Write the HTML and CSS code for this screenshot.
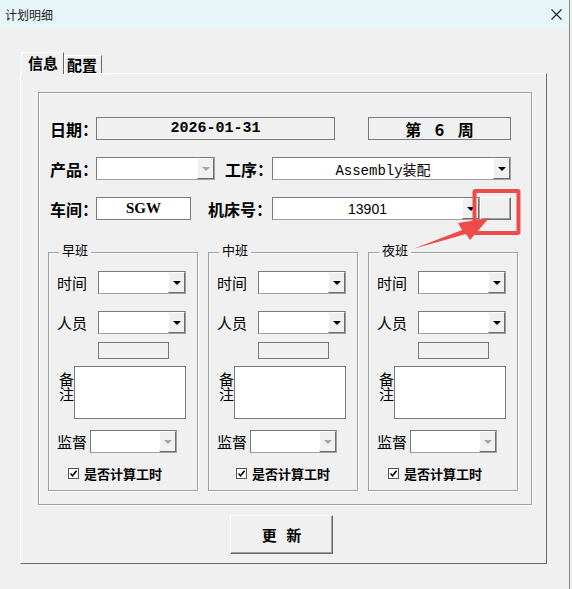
FILE: index.html
```html
<!DOCTYPE html>
<html lang="zh-CN">
<head>
    <meta charset="UTF-8">
    <title>计划明细</title>
    <link rel="stylesheet" href="styles.css">
</head>
<body>

<div class="window">
    <!-- Title bar -->
    <div class="titlebar">
        <span class="title">计划明细</span>
        <svg class="close" width="11" height="11" viewBox="0 0 11 11">
            <path d="M0.5 0.5 L10.5 10.5 M10.5 0.5 L0.5 10.5" stroke="#1a1a1a" stroke-width="1.1" fill="none"/>
        </svg>
    </div>

    <div class="client">
        <!-- Tabs -->
        <div class="tabs">
            <div class="tab active">信息</div>
            <div class="tab">配置</div>
        </div>

        <div class="tab-panel">
            <div class="frame">
                <div class="row">
                    <label class="lbl">日期：</label>
                    <div class="field date">2026-01-31</div>
                    <div class="field week"><span>第 6 周</span></div>
                </div>
                <div class="row">
                    <label class="lbl">产品：</label>
                    <div class="combo w-product">
                        <span class="combo-text"></span>
                        <span class="combo-btn disabled"><i class="tri"></i></span>
                    </div>
                    <label class="lbl lbl-process">工序：</label>
                    <div class="combo w-process">
                        <span class="combo-text mono">Assembly装配</span>
                        <span class="combo-btn"><i class="tri"></i></span>
                    </div>
                </div>
                <div class="row">
                    <label class="lbl">车间：</label>
                    <div class="field shop">SGW</div>
                    <label class="lbl lbl-machine">机床号：</label>
                    <div class="combo w-machine">
                        <span class="combo-text num">13901</span>
                        <span class="combo-btn"><i class="tri"></i></span>
                    </div>
                    <button class="pick"></button>
                </div>

                <!-- Shifts -->
                <div class="shifts">
                    <div class="shift">
                        <div class="shift-title">早班</div>
                        <div class="srow first">
                            <span class="slbl">时间</span>
                            <div class="combo w-shift"><span class="combo-text"></span><span class="combo-btn"><i class="tri"></i></span></div>
                        </div>
                        <div class="srow">
                            <span class="slbl">人员</span>
                            <div class="combo w-shift"><span class="combo-text"></span><span class="combo-btn"><i class="tri"></i></span></div>
                        </div>
                        <div class="small-field"></div>
                        <div class="notes">
                            <span class="notes-lbl">备注</span>
                            <div class="notes-box"></div>
                        </div>
                        <div class="srow super">
                            <span class="slbl short">监督</span>
                            <div class="combo w-super"><span class="combo-text"></span><span class="combo-btn disabled"><i class="tri"></i></span></div>
                        </div>
                        <div class="check">
                            <svg width="11" height="11" viewBox="0 0 11 11"><rect x="0.5" y="0.5" width="10" height="10" fill="#fff" stroke="#555"/><path d="M2.5 5.5 L4.5 7.8 L8.6 2.8" stroke="#000" stroke-width="1.6" fill="none"/></svg>
                            <span>是否计算工时</span>
                        </div>
                    </div>

                    <div class="shift">
                        <div class="shift-title">中班</div>
                        <div class="srow first">
                            <span class="slbl">时间</span>
                            <div class="combo w-shift"><span class="combo-text"></span><span class="combo-btn"><i class="tri"></i></span></div>
                        </div>
                        <div class="srow">
                            <span class="slbl">人员</span>
                            <div class="combo w-shift"><span class="combo-text"></span><span class="combo-btn"><i class="tri"></i></span></div>
                        </div>
                        <div class="small-field"></div>
                        <div class="notes">
                            <span class="notes-lbl">备注</span>
                            <div class="notes-box"></div>
                        </div>
                        <div class="srow super">
                            <span class="slbl short">监督</span>
                            <div class="combo w-super"><span class="combo-text"></span><span class="combo-btn disabled"><i class="tri"></i></span></div>
                        </div>
                        <div class="check wide">
                            <svg width="11" height="11" viewBox="0 0 11 11"><rect x="0.5" y="0.5" width="10" height="10" fill="#fff" stroke="#555"/><path d="M2.5 5.5 L4.5 7.8 L8.6 2.8" stroke="#000" stroke-width="1.6" fill="none"/></svg>
                            <span>是否计算工时</span>
                        </div>
                    </div>

                    <div class="shift">
                        <div class="shift-title">夜班</div>
                        <div class="srow first">
                            <span class="slbl">时间</span>
                            <div class="combo w-shift"><span class="combo-text"></span><span class="combo-btn"><i class="tri"></i></span></div>
                        </div>
                        <div class="srow">
                            <span class="slbl">人员</span>
                            <div class="combo w-shift"><span class="combo-text"></span><span class="combo-btn"><i class="tri"></i></span></div>
                        </div>
                        <div class="small-field"></div>
                        <div class="notes">
                            <span class="notes-lbl">备注</span>
                            <div class="notes-box"></div>
                        </div>
                        <div class="srow super">
                            <span class="slbl short">监督</span>
                            <div class="combo w-super"><span class="combo-text"></span><span class="combo-btn disabled"><i class="tri"></i></span></div>
                        </div>
                        <div class="check">
                            <svg width="11" height="11" viewBox="0 0 11 11"><rect x="0.5" y="0.5" width="10" height="10" fill="#fff" stroke="#555"/><path d="M2.5 5.5 L4.5 7.8 L8.6 2.8" stroke="#000" stroke-width="1.6" fill="none"/></svg>
                            <span>是否计算工时</span>
                        </div>
                    </div>
                </div>
            </div>

            <button class="btn-update">更 新</button>
        </div>
    </div>

    <!-- Red annotation drawn over the dialog -->
    <svg class="mark" width="572" height="589" viewBox="0 0 572 589">
        <rect x="474.5" y="191" width="44" height="42" rx="1" fill="none" stroke="#ef4b4b" stroke-width="4"/>
        <polygon points="413,249 462,230 458,223 489,218 470,240 466,234" fill="#ef4b4b"/>
    </svg>
</div>

</body>
</html>
```

FILE: styles.css
```css
/* Reset */
* {
    margin: 0;
    padding: 0;
    box-sizing: border-box;
}
body {
    font-family: "Noto Sans CJK SC", sans-serif;
    background: #f0f0f0;
    color: #000;
    width: 572px;
    height: 589px;
    overflow: hidden;
}

/* Window */
.window {
    position: relative;
    width: 570px;
    height: 589px;
    background: #f0f0f0;
    border-right: 1px solid #8a8a8a;
}
.titlebar {
    height: 28px;
    background: #e6f5f8;
    display: flex;
    align-items: center;
    justify-content: space-between;
    padding: 0 7px 0 5px;
}
.title {
    font-size: 12px;
    color: #222;
}
.client {
    padding: 24px 0 0 21px;
}

/* Tabs */
.tabs {
    display: flex;
    align-items: flex-end;
    height: 21px;
}
.tab {
    height: 18px;
    font-size: 15px;
    font-weight: 700;
    line-height: 17px;
    padding: 0 4px 0 2px;
    border-top: 1px solid #fff;
    border-left: 1px solid #fff;
    border-right: 1px solid #696969;
}
.tab.active {
    position: relative;
    z-index: 1;
    height: 22px;
    width: 43px;
    margin-bottom: -1px;
    padding: 1px 0 0 6px;
    background: #f0f0f0;
}
.tab-panel {
    width: 527px;
    height: 491px;
    margin-left: -1px;
    border: 1px solid;
    border-color: #fff #696969 #696969 #fff;
    padding: 18px 0 0 17px;
}

/* Inner etched frame */
.frame {
    width: 494px;
    height: 413px;
    border: 1px solid #a0a0a0;
    box-shadow: 1px 1px 0 #fff, inset 1px 1px 0 #fff;
    padding: 24px 0 0 11px;
}
.row {
    display: flex;
    align-items: center;
    height: 23px;
}
.row + .row {
    margin-top: 17px;
}
.lbl {
    width: 46px;
    font-size: 16px;
    font-weight: 700;
    white-space: nowrap;
}
.lbl-process {
    width: 47px;
    margin-left: 10px;
}
.lbl-machine {
    width: 64px;
    margin-left: 17px;
}

/* Plain fields */
.field {
    height: 23px;
    border: 1px solid #7a7a7a;
    display: flex;
    align-items: center;
    justify-content: center;
    font-weight: 700;
}
.date {
    width: 239px;
    margin-right: 33px;
    background: #f0f0f0;
    font-family: "Liberation Mono", monospace;
    font-size: 15px;
}
.week {
    width: 143px;
    background: #f0f0f0;
    font-size: 16px;
    word-spacing: 10px;
}
.shop {
    width: 95px;
    background: #fff;
    font-family: "Liberation Serif", serif;
    font-size: 15px;
}

/* Combo boxes */
.combo {
    height: 23px;
    display: flex;
    background: #fff;
    border: 1px solid;
    border-color: #7a7a7a #a0a0a0 #a0a0a0 #7a7a7a;
}
.combo-text {
    flex: 1;
    display: flex;
    align-items: center;
    justify-content: center;
    font-size: 15px;
}
.combo-text.mono {
    font-family: "Liberation Mono", "Noto Sans CJK SC", monospace;
    font-size: 14px;
}
.combo-text.num {
    font-family: "Liberation Sans", sans-serif;
    font-size: 14px;
}
.combo-btn {
    width: 17px;
    display: flex;
    align-items: center;
    justify-content: center;
    background: #f0f0f0;
    border: 1px solid;
    border-color: #fff #6d6d6d #6d6d6d #fff;
}
.tri {
    width: 0;
    height: 0;
    border-left: 4px solid transparent;
    border-right: 4px solid transparent;
    border-top: 4px solid #000;
}
.combo-btn.disabled .tri {
    border-top-color: #a6a6a6;
}
.w-product { width: 119px; }
.w-process { width: 239px; }
.w-machine { width: 208px; }
.w-shift { width: 88px; }
.w-super { width: 87px; }

.pick {
    width: 31px;
    height: 23px;
    background: #f0f0f0;
    border: 1px solid;
    border-color: #fff #6d6d6d #6d6d6d #fff;
    box-shadow: inset -1px -1px 0 #a0a0a0;
}

/* Shift groups */
.shifts {
    display: flex;
    gap: 10px;
    margin: 32px 0 0 -2px;
}
.shift {
    width: 150px;
    border: 1px solid #a0a0a0;
    box-shadow: 1px 1px 0 #fff, inset 1px 1px 0 #fff;
    padding: 0 0 9px 8px;
}
.shift-title {
    width: fit-content;
    margin: -11px 0 0 2px;
    padding: 0 3px;
    background: #f0f0f0;
    font-size: 13px;
    line-height: 16px;
}
.srow {
    display: flex;
    align-items: center;
    height: 23px;
    margin-top: 17px;
}
.srow.first {
    margin-top: 13px;
}
.srow.super {
    margin-top: 11px;
}
.slbl {
    width: 41px;
    font-size: 15px;
}
.slbl.short {
    width: 33px;
}
.small-field {
    width: 71px;
    height: 17px;
    margin: 8px 0 0 41px;
    border: 1px solid #7a7a7a;
    background: #f0f0f0;
}
.notes {
    display: flex;
    margin-top: 7px;
}
.notes-lbl {
    writing-mode: vertical-rl;
    width: 17px;
    margin-top: 6px;
    font-size: 15px;
    line-height: 15px;
}
.notes-box {
    width: 112px;
    height: 53px;
    background: #fff;
    border: 1px solid #7a7a7a;
}
.check {
    display: flex;
    align-items: center;
    height: 16px;
    margin-top: 12px;
    padding-left: 11px;
    gap: 5px;
    font-size: 13px;
    font-weight: 700;
}
.check.wide {
    padding-left: 19px;
}
.check svg {
    display: block;
}

/* Update button */
.btn-update {
    display: block;
    width: 103px;
    height: 39px;
    margin: 10px 0 0 192px;
    background: #f0f0f0;
    border: 1px solid;
    border-color: #fff #696969 #696969 #fff;
    box-shadow: inset -1px -1px 0 #a0a0a0;
    font-family: "Noto Sans CJK SC", sans-serif;
    font-size: 15px;
    font-weight: 700;
    word-spacing: 6px;
}

/* Annotation overlay */
.mark {
    position: absolute;
    top: 0;
    left: 0;
    pointer-events: none;
}
```
